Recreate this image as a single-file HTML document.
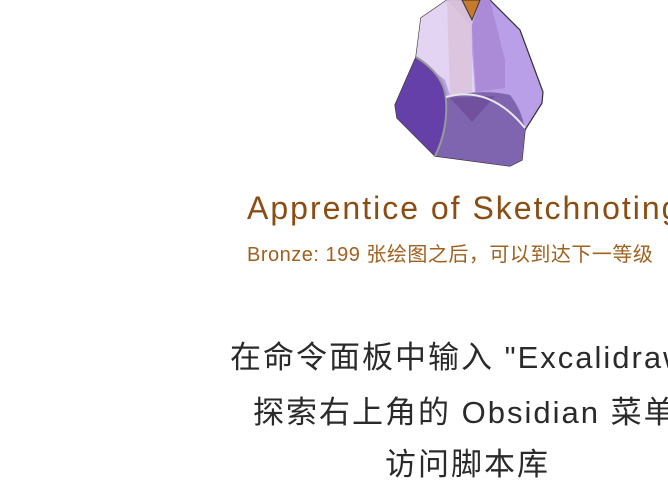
<!DOCTYPE html>
<html><head><meta charset="utf-8"><style>
html,body{margin:0;padding:0;background:#fff;width:668px;height:481px;overflow:hidden;position:relative}
.c{position:absolute;white-space:nowrap}
.t{left:247px;top:190px;font:32px "Liberation Sans","Noto Sans CJK SC",sans-serif;color:#8b4d12;letter-spacing:2px}
.s{left:247px;top:238px;font:20px "Liberation Sans","Noto Sans CJK SC",sans-serif;color:#a0601f;letter-spacing:.5px}
.l{font:31px "Liberation Sans","Noto Sans CJK SC",sans-serif;color:#2a2a2a;letter-spacing:2px}
</style></head><body>
<svg width="668" height="481" style="position:absolute;left:0;top:0">
<path d="M447,0 L490,0 L520,30 L543,92 L542,103 L525,130 L522,160 L510,166 L435,156 L397,118 L395,105 L416,57 L421,18 Z" fill="#b99ee8" stroke="#333" stroke-width="1.2"/>
<path d="M447,0 L421,18 L416,57 L445,80 L450,95 L475,92 L470,25 Z" fill="#e2d4f2"/>
<path d="M447,0 L480,0 L472,25 L472,92 L450,95 Z" fill="#dcc3dc" opacity=".9"/>
<path d="M480,0 L490,0 L505,60 L505,88 L476,92 L472,25 Z" fill="#ab8ad8"/>
<path d="M416,57 Q447,75 446,100 Q448,130 435,156 L397,118 L395,105 Z" fill="#6540a8"/>
<path d="M446,98 Q480,88 510,95 Q522,110 525,130 L522,160 L510,166 L435,156 Q448,130 446,98 Z" fill="#7f65b0"/>
<path d="M450,98 L495,96 L472,122 Z" fill="#6e4c9a" opacity=".8"/>
<path d="M416,57 Q445,75 446,100 Q448,130 435,156" fill="none" stroke="#999" stroke-width="2"/>
<path d="M446,97 Q490,85 525,128" fill="none" stroke="#e8e8e8" stroke-width="2"/>
<path d="M462,0 L472,20 L480,0 Z" fill="#c77a2a" stroke="#333"/>
</svg>
<div class="c t">Apprentice of Sketchnoting</div>
<div class="c s">Bronze: 199 张绘图之后，可以到达下一等级</div>
<div class="c l" style="left:230px;top:332px">在命令面板中输入 "Excalidraw ..."</div>
<div class="c l" style="left:253px;top:387px">探索右上角的 Obsidian 菜单</div>
<div class="c l" style="left:385px;top:439px">访问脚本库</div>
</body></html>
